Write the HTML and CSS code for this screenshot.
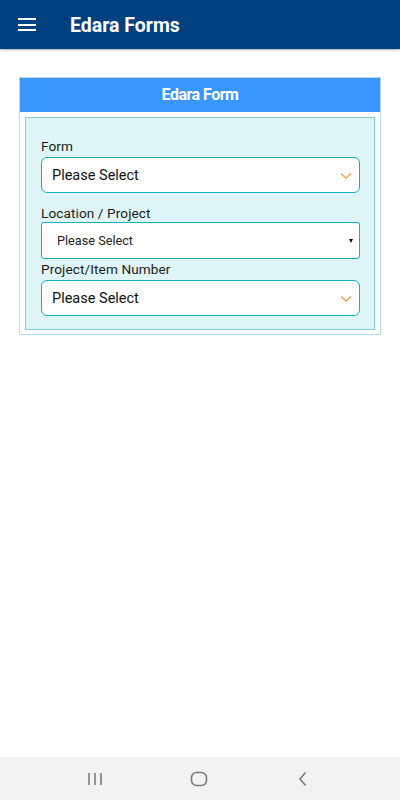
FILE: index.html
```html
<!DOCTYPE html>
<html lang="en">
  <head>
    <meta charset="UTF-8" />
    <meta name="viewport" content="width=device-width, initial-scale=1.0" />
    <title>Edara Forms</title>
    <link rel="stylesheet" href="styles.css">
  </head>
  <body>
    <header class="topbar">
      <button class="menu-btn" aria-label="Menu">
        <span></span><span></span><span></span>
      </button>
      <h1 class="title">Edara Forms</h1>
    </header>

    <main class="content">
      <div class="card">
        <div class="card-head">Edara Form</div>
        <div class="card-body">
          <div class="panel">
            <div class="field">
              <label class="field-label">Form</label>
              <div class="picker">
                <span>Please Select</span>
                <svg class="chevron" width="12" height="8" viewBox="0 0 12 8">
                  <path d="M1 1.5 L6 6 L11 1.5" fill="none" stroke="#f5a25a" stroke-width="1.6" />
                </svg>
              </div>
            </div>
            <div class="field field-native">
              <label class="field-label">Location / Project</label>
              <div class="picker picker-native">
                <span>Please Select</span>
                <span class="caret"></span>
              </div>
            </div>
            <div class="field field-last">
              <label class="field-label">Project/Item Number</label>
              <div class="picker">
                <span>Please Select</span>
                <svg class="chevron" width="12" height="8" viewBox="0 0 12 8">
                  <path d="M1 1.5 L6 6 L11 1.5" fill="none" stroke="#f5a25a" stroke-width="1.6" />
                </svg>
              </div>
            </div>
          </div>
        </div>
      </div>
    </main>

    <nav class="navbar">
      <div class="nav-cell">
        <svg width="16" height="14" viewBox="0 0 16 14">
          <path d="M2 1 V13 M8 1 V13 M14 1 V13" stroke="#7a7a7a" stroke-width="1.6" />
        </svg>
      </div>
      <div class="nav-cell">
        <svg width="18" height="16" viewBox="0 0 18 16">
          <rect x="1.5" y="1.5" width="15" height="13" rx="5" fill="none" stroke="#7a7a7a" stroke-width="1.6" />
        </svg>
      </div>
      <div class="nav-cell">
        <svg width="12" height="16" viewBox="0 0 12 16">
          <path d="M8.5 1.5 L3 8 L8.5 14.5" fill="none" stroke="#7a7a7a" stroke-width="1.6" />
        </svg>
      </div>
    </nav>
  </body>
</html>
```

FILE: styles.css
```css
*{
    margin: 0;
    padding: 0;
    box-sizing: border-box;
}

body{
    display: flex;
    flex-direction: column;
    min-height: 100vh;
    font-family: Roboto, "Liberation Sans", sans-serif;
    background-color: #ffffff;
}

.topbar{
    display: flex;
    align-items: center;
    height: 49px;
    background-color: #02417f;
    box-shadow: 0 1px 2px rgba(0, 0, 0, 0.35);
    position: relative;
    z-index: 1;
}

.menu-btn{
    display: flex;
    flex-direction: column;
    gap: 3.3px;
    margin-left: 18px;
    width: 18px;
    background: none;
    border: none;
}

.menu-btn span{
    display: block;
    height: 2px;
    background-color: #ffffff;
}

.title{
    margin-left: 34px;
    padding-top: 1px;
    color: #ffffff;
    font-size: 19.5px;
    font-weight: 700;
}

.content{
    flex: 1;
    padding: 28px 19px 0 19px;
}

.card{
    border: 1px solid #b9d7f6;
}

.card-head{
    height: 34px;
    line-height: 34px;
    text-align: center;
    background-color: #3996fd;
    color: #ffffff;
    font-size: 16px;
    font-weight: 700;
    letter-spacing: -0.5px;
}

.card-body{
    padding: 5px 5px 4px 5px;
}

.panel{
    background-color: #dff4f7;
    border: 1px solid #7ecfdb;
    padding: 20px 14px 13px 15px;
}

.field{
    margin-bottom: 12px;
}

.field-native{
    margin-bottom: 2px;
}

.field-last{
    margin-bottom: 0;
}

.field-label{
    display: block;
    height: 16px;
    line-height: 16px;
    margin-bottom: 3px;
    font-size: 13.6px;
    color: #1c1c1c;
    letter-spacing: 0.1px;
}

.field-native .field-label{
    margin-bottom: 1px;
}

.picker{
    display: flex;
    align-items: center;
    justify-content: space-between;
    height: 36px;
    padding: 0 7px 0 10px;
    background-color: #ffffff;
    border: 1px solid #12b1c1;
    border-radius: 6px;
    font-size: 14.5px;
    color: #111111;
}

.picker-native{
    height: 37px;
    padding: 0 6px 0 15px;
    border-radius: 3px;
    font-size: 12.7px;
    color: #222222;
}

.chevron{
    margin-top: 1px;
}

.caret{
    width: 0;
    height: 0;
    border-left: 2.5px solid transparent;
    border-right: 2.5px solid transparent;
    border-top: 4px solid #111111;
    margin-top: 1px;
}

.navbar{
    display: grid;
    grid-template-columns: repeat(3, 104px);
    align-items: center;
    height: 43px;
    padding-left: 43px;
    background-color: #f2f2f2;
}

.nav-cell{
    display: flex;
    justify-content: center;
    align-items: center;
}
```
